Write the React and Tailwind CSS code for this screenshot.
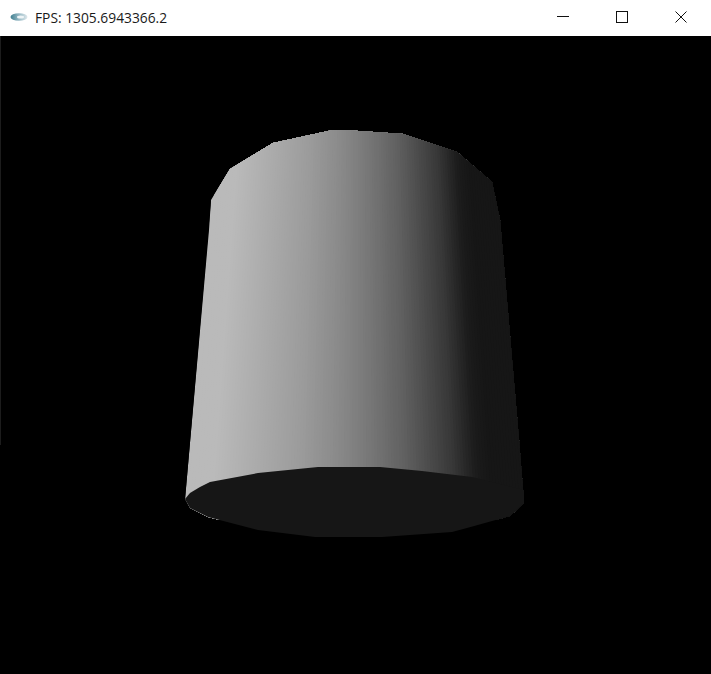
const outline = "185,499 209,230 211,200 230,169 273,143 333,130 343,130 403,134 457,152 492,182 500,220 519,440 524,503 510,516 467,528 452,532 382,537 315,537 258,530 208,517 190,508";
const cap = "185,499 190,493 200,487 210,482 258,473 288,470 318,467 380,467 422,471 472,477 524,490 524,503 510,516 467,528 452,532 382,537 315,537 258,530 208,517 190,508";

const stops = [
  [0, 186], [0.08, 186], [0.2, 172], [0.33, 156], [0.446, 138], [0.55, 118], [0.65, 96], [0.79, 56], [0.86, 28], [0.9, 22], [1, 22],
];

function shade(t) {
  for (let i = 1; i < stops.length; i++) {
    if (t <= stops[i][0]) {
      const [a, va] = stops[i - 1];
      const [b, vb] = stops[i];
      return Math.round(va + ((t - a) / (b - a)) * (vb - va));
    }
  }
  return 22;
}

function xAt(t, y) {
  const k = (y - 200) / 300;
  const left = 211 + (185 - 211) * k;
  const right = 500 + (525 - 500) * k;
  return left + (right - left) * t;
}

const N = 120;
const strips = Array.from({ length: N }, (_, i) => {
  const t0 = i / N;
  const v = shade((i + 0.5) / N);
  return {
    pts: `${xAt(t0, 110)},110 ${xAt(1, 110) + 2},110 ${xAt(1, 520) + 2},520 ${xAt(t0, 520)},520`,
    fill: `rgb(${v},${v},${v})`,
  };
});

function Cylinder() {
  return (
    <svg width="711" height="638" viewBox="0 36 711 638" className="block">
      <defs>
        <clipPath id="body">
          <polygon points={outline} />
        </clipPath>
      </defs>
      <path d="M0.5 36V445" stroke="#1c1c1c" />
      <g clipPath="url(#body)">
        {strips.map((s, i) => (
          <polygon key={i} points={s.pts} fill={s.fill} />
        ))}
      </g>
      <polygon points={cap} fill="#161616" />
    </svg>
  );
}

function AppIcon() {
  return (
    <svg width="18" height="10" viewBox="0 0 18 10">
      <defs>
        <linearGradient id="iconFill" x1="0" x2="1" y1="0" y2="0">
          <stop offset="0" stopColor="#3f7f90" />
          <stop offset="0.45" stopColor="#8fb4c0" />
          <stop offset="1" stopColor="#dfe8ec" />
        </linearGradient>
      </defs>
      <ellipse cx="9" cy="5" rx="8.5" ry="3.8" fill="url(#iconFill)" />
      <ellipse cx="10.5" cy="5" rx="3.5" ry="1.5" fill="#eef4f6" />
    </svg>
  );
}

export default function App() {
  return (
    <div className="w-[711px] h-[674px] flex flex-col bg-black overflow-hidden">
      <div className="h-9 shrink-0 bg-white flex items-center">
        <div className="w-[35px] pl-[10px] flex items-center pb-[2px]">
          <AppIcon />
        </div>
        <span className="text-[13.8px] text-[#1a1a1a] leading-none pb-[1px] font-['Open_Sans',sans-serif]">FPS: 1305.6943366.2</span>
        <div className="ml-auto flex h-full pb-[2px]">
          <div className="w-[58px] flex items-center justify-center">
            <svg width="12" height="12" viewBox="0 0 12 12"><path d="M0 5.5H12" stroke="#111" /></svg>
          </div>
          <div className="w-[59px] flex items-center justify-center">
            <svg width="12" height="12" viewBox="0 0 12 12"><rect x="0.5" y="0.5" width="11" height="11" fill="none" stroke="#111" /></svg>
          </div>
          <div className="w-[60px] flex items-center justify-center">
            <svg width="12" height="12" viewBox="0 0 12 12"><path d="M0.5 0.5L11.5 11.5M11.5 0.5L0.5 11.5" stroke="#111" /></svg>
          </div>
        </div>
      </div>
      <div className="flex-1 min-h-0">
        <Cylinder />
      </div>
    </div>
  );
}
